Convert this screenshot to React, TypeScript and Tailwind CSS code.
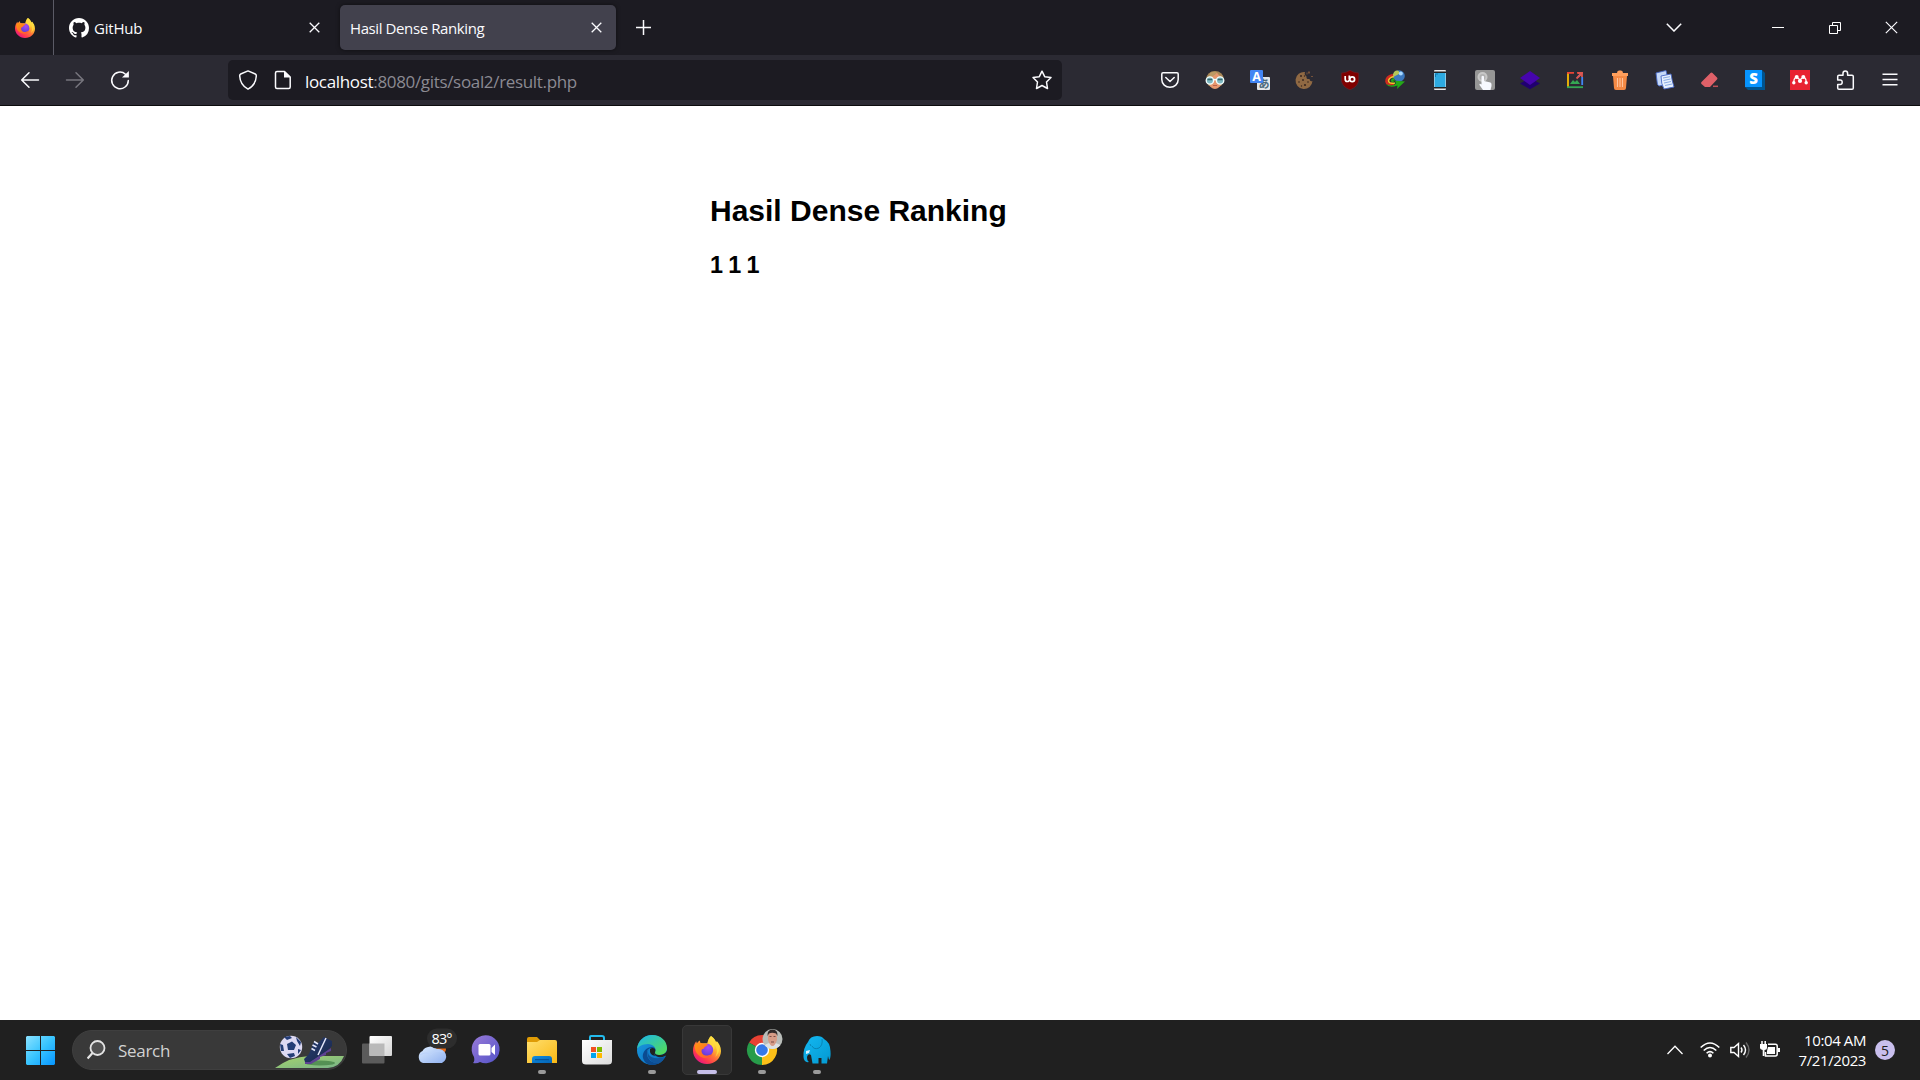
import React from "react";

const UI = "font-['Open_Sans','Noto_Sans',sans-serif]";

function Firefox({ id, size }: { id: string; size: number }) {
  return (
    <svg width={size} height={size} viewBox="0 0 28 28" className="block shrink-0">
      <defs>
        <linearGradient id={id + "a"} x1="0.85" y1="0.1" x2="0.2" y2="0.95">
          <stop offset="0" stopColor="#fff44f" />
          <stop offset="0.3" stopColor="#ffbd2f" />
          <stop offset="0.55" stopColor="#ff7139" />
          <stop offset="0.8" stopColor="#ff3750" />
          <stop offset="1" stopColor="#e31587" />
        </linearGradient>
        <radialGradient id={id + "b"} cx="0.6" cy="0.3" r="0.8">
          <stop offset="0" stopColor="#a84bf0" />
          <stop offset="0.6" stopColor="#7542e5" />
          <stop offset="1" stopColor="#5b3bc4" />
        </radialGradient>
        <linearGradient id={id + "c"} x1="0" y1="0" x2="1" y2="1">
          <stop offset="0" stopColor="#ff980e" />
          <stop offset="1" stopColor="#ff5634" />
        </linearGradient>
      </defs>
      <path
        d="M18 0C21 2 22 4 23 6.200C23.700 6.500 23.800 5.500 23.700 5C26 7.300 28 11 28 15C28 22 22 28 14 28C6 28 0 22 0 14.500C0 11 1.300 7.500 3.200 5.200C3.500 6 3.700 6.800 4 7.200C5 5.500 5.800 5 7 4.500C7 6 7.300 7 8 7.300C10.500 7 13 7.400 14.200 7.200C15 4.500 16 2 18 0Z"
        fill={"url(#" + id + "a)"}
      />
      <circle cx="14" cy="14" r="6.200" fill={"url(#" + id + "b)"} />
      <path
        d="M2 9C4 6.800 8 6.400 10.600 8C12.500 7.400 14 8 15 9C13.500 9.300 12.700 10.500 11.200 11.500C11.500 12.500 10 13 9 13.200C8 15 8.500 18 11.500 19.200C14.500 20.300 17 18.300 19.200 18.500C17.500 21.500 13.500 23 9.500 21.500C4.500 19.800 1 14.500 2 9Z"
        fill={"url(#" + id + "c)"}
      />
      <path d="M18 0C15.500 2.500 14.800 5 15.500 7.200C18.500 8.800 20.500 11 20.500 14C22 12.500 22 10 21 8.500C25 12 24.500 18 22 21C27 17.500 27.500 11 23.700 5C23.800 5.500 23.700 6.500 23 6.200C22 4 21 2 18 0Z" fill="#ffdc40" opacity="0.8" />
    </svg>
  );
}

function Cross({ size = 11, w = 1.3 }: { size?: number; w?: number }) {
  return (
    <svg width={size} height={size} viewBox="0 0 11 11" className="block shrink-0" fill="none" stroke="#fbfbfe" strokeWidth={w}>
      <path d="M.7 .7L10.300 10.300M10.300 .7L.7 10.300" />
    </svg>
  );
}

function Icon({ children }: { children: React.ReactNode }) {
  return (
    <svg width="20" height="20" viewBox="0 0 20 20" className="block shrink-0 overflow-visible" fill="none">
      {children}
    </svg>
  );
}

const line = { stroke: "#fbfbfe", strokeWidth: 1.5, strokeLinecap: "round" as const, strokeLinejoin: "round" as const };

const extensions: React.ReactNode[] = [
  <g {...line}>
    <path d="M3 2.700H17Q18.200 2.700 18.200 4V9.500C18.200 14 14.500 17.300 10 17.300S1.800 14 1.800 9.500V4Q1.800 2.700 3 2.700Z" />
    <path d="M5.800 7.500L10 11.500L14.200 7.500" />
  </g>,
  <g>
    <ellipse cx="10" cy="9.500" rx="9" ry="8.500" fill="#a88757" />
    <path d="M3 8C6 6 10 5 12 2.500C13 5 16 6 17 8V12C16 16 13 19 10 19S4 16 3 12Z" fill="#e5986f" />
    <path d="M4 7Q9 7 12 2Q8 1 5 3Z" fill="#bd9a65" />
    <circle cx="4.900" cy="10.500" r="3.700" fill="#7fb9c2" stroke="#f4ffff" strokeWidth="1.300" />
    <circle cx="15.100" cy="10.500" r="3.700" fill="#7fb9c2" stroke="#f4ffff" strokeWidth="1.300" />
    <path d="M2.500 9.500H7.300M12.700 9.500H17.500" stroke="#38666e" strokeWidth="1.500" />
    <path d="M8.500 10Q10 8.800 11.500 10" stroke="#f4ffff" strokeWidth="1.500" />
    <path d="M8 15.500H12" stroke="#bd604b" />
  </g>,
  <g>
    <rect x="7" y="7" width="13" height="13" rx="1" fill="#e4e7e9" />
    <text x="8.500" y="18" fontSize="11" fontWeight="700" fill="#4d6b7d" fontFamily="Noto Sans CJK JP, sans-serif">あ</text>
    <rect width="13" height="13" rx="1" fill="#4285f4" />
    <text x="6.500" y="10.800" textAnchor="middle" fontSize="12.500" fontWeight="700" fill="#fff" fontFamily="Open Sans, sans-serif">A</text>
  </g>,
  <g>
    <path d="M10 2A8.500 8.500 0 1 0 17.500 11Q15 12 14.500 9Q11 9.500 11.500 6.500Q9 4.500 10 2Z" fill="#906943" />
    <path d="M13 1.500h2v2h-2zM16 6h2v1h-2zM11.500 2.500h1v2h-1z" fill="#74513a" />
    <g fill="#37261f">
      <circle cx="6" cy="6" r="1" /><circle cx="8" cy="10" r=".9" /><circle cx="4" cy="12" r=".8" />
      <circle cx="10" cy="15" r="1.100" /><circle cx="13" cy="12" r=".8" /><circle cx="6.500" cy="16" r=".7" /><circle cx="9.500" cy="6" r=".7" />
    </g>
  </g>,
  <g>
    <path d="M10 .3Q14 3 18.700 3V9C18.700 14.500 15 18 10 19.700C5 18 1.300 14.500 1.300 9V3Q6 3 10 .3Z" fill="#800000" stroke="#5f2730" strokeWidth=".6" />
    <path d="M5.200 6V9Q5.200 11.500 7.200 11.500T9.300 9.500" stroke="#fff" strokeWidth="1.700" />
    <path d="M9.300 5.500V9.200" stroke="#fff" strokeWidth="1.700" />
    <circle cx="12.200" cy="9.200" r="2.400" stroke="#fff" strokeWidth="1.700" />
  </g>,
  <g>
    <circle cx="14" cy="6" r="5.800" fill="#3c78bd" />
    <path d="M9 2Q12-.5 14 1.500Q15 4 12 5Q9 6 8 8Q7 5 9 2Z" fill="#b6c657" />
    <circle cx="15.800" cy="3.500" r="2" fill="#a8d8ff" />
    <path d="M8 5Q1 7 1.500 11.500Q2 15.500 9 14" stroke="#cf2a20" strokeWidth="2.600" />
    <path d="M8.500 6.500Q3.500 8 3.500 11Q4 14 10 13" stroke="#f7c52c" strokeWidth="1.500" />
    <path d="M9 8Q5 9 6 11.500L10 13L8 10.500L20 11.500L12 19L12.500 15.500Q4 18.500 1 14Q7 17 11 13.500" fill="#24a817" />
  </g>,
  <g>
    <rect x="4" y="0" width="12" height="20" rx="1" fill="#e8e8e8" />
    <path d="M4 1.500h12v1.500H4zM4 17h12v1.500H4z" fill="#222" />
    <rect x="4.500" y="3" width="11" height="14" fill="#2daae1" />
    <path d="M5.500 7V4H8" stroke="#107bb4" />
  </g>,
  <g>
    <rect width="20" height="20" rx="2" fill="#969696" />
    <circle cx="7.500" cy="7" r="5" fill="#c8c8c8" /><circle cx="7.500" cy="7" r="3" fill="#b2b2b2" />
    <path d="M6.500 6.500Q7.700 5 9 6.500V11L15.500 12.500Q17 13 16.500 16L15.500 20H8L4.500 15Q4 13 6.500 14.500Z" fill="#f7f9ff" />
  </g>,
  <g>
    <path d="M0 13.500L10 8L20 13.500L10 19.300Z" fill="#20006f" />
    <path d="M0 8L10 1L20 8L10 15Z" fill="#4605ad" />
  </g>,
  <g strokeWidth="1.800">
    <path d="M3 2V17" stroke="#fbbc04" /><path d="M2 17.200H18" stroke="#34a853" />
    <path d="M2 2.800H9M12 2.800H18" stroke="#ea4335" /><path d="M17.200 7V15M13 7L17 3" stroke="#4285f4" />
    <path d="M11.500 8.500L16.500 3.500M13 3H17V7" stroke="#dc5650" />
    <path d="M5 14L8 10L10 12L12 10L15 14Z" fill="#34a853" />
  </g>,
  <g>
    <path d="M2 3H7Q7 .5 9 .5H11Q13 .5 13 3H18V6H2Z" fill="#ff9f5c" />
    <path d="M3 6H17L16 18Q16 20 14 20H6Q4 20 4 18Z" fill="#f58a45" />
    <path d="M7.500 8V17M10 8V17M12.500 8V17" stroke="#ffc39d" strokeWidth="1.100" />
  </g>,
  <g>
    <path d="M1 3L11 .5L14 14L4 16Q2 15 2 11Z" fill="#c5d8f7" stroke="#4668c5" strokeWidth=".9" />
    <path d="M6 6L16 4Q17 11 19 17L9 19Q6 14 6 6Z" fill="#e6effd" stroke="#4668c5" strokeWidth=".9" />
    <path d="M8 8L15 6.700M8.500 10.500L15.500 9M9 13L16 11.500M10 15.500L17 14" stroke="#88aae3" />
  </g>,
  <g>
    <path d="M1.500 12L10.500 3Q11.500 2 12.500 3L17 7.500Q18 8.500 17 9.500L10 17H5L1.500 14Q.5 13 1.500 12Z" fill="#df6068" />
    <path d="M13 16.300H18" stroke="#bd5057" strokeWidth="1.500" />
  </g>,
  <g>
    <path d="M0 17L3 20H20V3L17 0Z" fill="#00548f" />
    <rect width="17" height="17" fill="#0794ff" />
    <text x="8.500" y="13.700" textAnchor="middle" fontSize="15" fontWeight="800" fill="#fff" fontFamily="Open Sans, sans-serif">S</text>
  </g>,
  <g>
    <rect width="20" height="20" fill="#e82231" />
    <path d="M3.800 12Q3.600 9 5.500 7.500M16.200 12Q16.400 9 14.500 7.500" stroke="#fff" strokeWidth="1.300" />
    <path d="M6.500 7L10 9.800L13.500 7" stroke="#fff" strokeWidth="1.200" />
    <g fill="#fff"><circle cx="6.700" cy="6.900" r="2" /><circle cx="13.300" cy="6.900" r="2" /><circle cx="3.800" cy="12.700" r="1.700" /><circle cx="10" cy="11" r="2.100" /><circle cx="16.200" cy="12.700" r="1.700" /></g>
  </g>,
  <path {...line} d="M4 19.300Q2.700 19.300 2.700 18V14.500H5Q7.200 14.500 7.200 12.200T5 10H2.700V6.500Q2.700 5.200 4 5.200H8V3.200Q8 .9 10.300 .9T12.600 3.200V5.200H17Q18.300 5.200 18.300 6.500V18Q18.300 19.300 17 19.300Z" />,
  <path {...line} strokeLinecap="butt" d="M2.500 4.200H17.500M2.500 9.500H17.500M2.500 14.800H17.500" />,
];

function TabStrip() {
  return (
    <div className="flex h-[55px] shrink-0 items-center bg-[#1c1b22]">
      <div className="flex h-full w-[54px] items-center border-r border-[#5b5b66] pl-[15px]">
        <Firefox id="fxs" size={20} />
      </div>
      <div className="flex h-[45px] w-[286px] items-center pr-5 pl-[15px]">
        <svg width="20" height="20" viewBox="0 0 16 16" fill="#fff" className="shrink-0">
          <path d="M8 0C3.580 0 0 3.580 0 8c0 3.540 2.290 6.530 5.470 7.590.4.070.55-.17.55-.38 0-.19-.01-.82-.01-1.490-2.010.37-2.530-.49-2.690-.94-.09-.23-.48-.94-.82-1.130-.28-.15-.68-.52-.01-.53.63-.01 1.080.58 1.230.82.72 1.210 1.870.87 2.330.66.070-.52.28-.87.51-1.070-1.780-.2-3.640-.89-3.640-3.950 0-.87.31-1.590.82-2.150-.08-.2-.36-1.020.08-2.120 0 0 .67-.21 2.200.82.64-.18 1.320-.27 2-.27s1.360.09 2 .27c1.530-1.040 2.200-.82 2.200-.82.44 1.100.16 1.920.08 2.120.51.56.82 1.270.82 2.150 0 3.070-1.870 3.750-3.650 3.950.29.25.54.73.54 1.480 0 1.070-.01 1.930-.01 2.200 0 .21.15.46.55.38A8.010 8.010 0 0016 8c0-4.420-3.580-8-8-8z" />
        </svg>
        <span className="ml-[5px] pt-px text-[15px] tracking-[-0.2px] text-[#fbfbfe]">GitHub</span>
        <span className="ml-auto"><Cross /></span>
      </div>
      <div className="flex h-[45px] w-[276px] items-center rounded-[5px] bg-[#42414d] pr-[14px] pl-[10px] shadow-[0_0_4px_rgba(0,0,0,0.5)]">
        <span className="pt-px text-[15px] tracking-[-0.4px] text-[#fbfbfe]">Hasil Dense Ranking</span>
        <span className="ml-auto"><Cross /></span>
      </div>
      <svg width="15" height="15" viewBox="0 0 15 15" className="ml-5" stroke="#fbfbfe" strokeWidth="1.500">
        <path d="M0 7.500H15M7.500 0V15" />
      </svg>
      <div className="ml-auto flex items-center pr-[22px]">
        <svg width="16" height="9" viewBox="0 0 16 9" fill="none" stroke="#fbfbfe" strokeWidth="1.500" className="mr-[90px]">
          <path d="M.8 .8L8 8L15.200 .8" />
        </svg>
        <div className="mr-[45px] h-px w-3 bg-white" />
        <svg width="12" height="12" viewBox="0 0 12 12" fill="none" stroke="#fff" className="mr-[44px]">
          <path d="M.5 3.500H8.500V11.500H.5ZM3.500 3.500V.5H11.500V8.500H8.500" />
        </svg>
        <Cross size={13} w={1} />
      </div>
    </div>
  );
}

function Toolbar() {
  return (
    <div className="flex h-[51px] shrink-0 items-center border-b border-[#0c0c0d] bg-[#2b2a33]">
      <div className="flex w-[228px] items-center gap-[25px] pl-5">
        <Icon><path {...line} d="M18.500 10H1.800M9 2.700L1.700 10L9 17.300" /></Icon>
        <Icon><path {...line} stroke="#77767e" d="M1.500 10H18.200M11 2.700L18.300 10L11 17.300" /></Icon>
        <Icon>
          <path {...line} d="M18.300 10.500A8.300 8.300 0 1 1 15.500 4.200" />
          <path d="M18.900 1V7.500H12Z" fill="#fbfbfe" />
        </Icon>
      </div>
      <div className="flex h-10 w-[834px] items-center rounded-[5px] bg-[#1c1b22] pr-[10px] pl-[10px]">
        <Icon><path {...line} d="M10 .9L17.300 4Q18.400 4.500 18.300 6C18 12 15 16.500 10 19.200C5 16.500 2 12 1.700 6Q1.600 4.500 2.700 4Z" /></Icon>
        <span className="ml-[15px]">
          <Icon>
            <path {...line} d="M4 1.500H11.500L17.200 7V17Q17.200 18.500 15.700 18.500H4Q2.500 18.500 2.500 17V3Q2.500 1.500 4 1.500Z" />
            <path d="M11 1V7.500H17.500Z" fill="#fbfbfe" />
          </Icon>
        </span>
        <span className="ml-3 pt-[3px] text-[17px] leading-none tracking-[-0.33px] whitespace-nowrap text-[#8b8a92]">
          <span className="text-[#fbfbfe]">localhost</span>:8080/gits/soal2/result.php
        </span>
        <span className="ml-auto">
          <Icon><path {...line} d="M10 1.200L12.700 6.700L19 7.500L14.500 12L15.500 18.500L10 15.500L4.500 18.500L5.500 12L1 7.500L7.300 6.700Z" /></Icon>
        </span>
      </div>
      <div className="ml-auto flex pr-2">
        {extensions.map((e, i) => (
          <div key={i} className="flex w-[45px] justify-center"><Icon>{e}</Icon></div>
        ))}
      </div>
    </div>
  );
}

function AppSlot({ children, mark, active }: { children: React.ReactNode; mark?: boolean; active?: boolean }) {
  return (
    <div className="flex w-[55px] justify-center">
      <div className={active ? "relative flex h-[50px] w-[50px] items-center justify-center rounded-[5px] border border-[#383838] bg-[#2d2d2d]" : "relative flex h-[50px] w-[50px] items-center justify-center"}>
        {children}
        {mark && <div className={active ? "absolute bottom-0 h-1 w-5 rounded-full bg-[#c6bfe9]" : "absolute bottom-px h-1 w-2 rounded-full bg-[#9a9a9a]"} />}
      </div>
    </div>
  );
}

function Art({ children }: { children: React.ReactNode }) {
  return <svg width="30" height="30" viewBox="0 0 30 30" fill="none" className="block shrink-0 overflow-visible">{children}</svg>;
}

function Gradients() {
  const g: [string, string, string][] = [
    ["tv", "#ffffff", "#d5d5d5"], ["cloud", "#dcecff", "#8fb0ef"],
    ["chat", "#9a7bd8", "#5252c8"], ["fold", "#ffdf6e", "#f9b814"], ["bag", "#ffffff", "#dcdcdc"],
    ["edgeA", "#1bb5ee", "#58e04c"], ["edgeB", "#1b9de0", "#0867bd"], ["ele", "#14b8f2", "#0399d1"],
    ["grass", "#a6d36b", "#77b389"], ["boot", "#293f75", "#172546"], ["blue", "#0f8de0", "#0463b4"],
  ];
  return (
    <defs>
      {g.map(([id, a, b]) => (
        <linearGradient key={id} id={id} x1="0" y1="0" x2="1" y2="1">
          <stop offset="0" stopColor={a} /><stop offset="1" stopColor={b} />
        </linearGradient>
      ))}
      <linearGradient id="logo" gradientUnits="userSpaceOnUse" x1="0" y1="0" x2="29" y2="29">
        <stop offset="0" stopColor="#8be2ff" /><stop offset="0.5" stopColor="#38c4ff" /><stop offset="1" stopColor="#0695ff" />
      </linearGradient>
    </defs>
  );
}

function Taskbar() {
  return (
    <div className="flex h-[60px] shrink-0 items-center bg-[#202020]">
      <svg width="29" height="29" viewBox="0 0 29 29" className="ml-[26px]">
        <Gradients />
        <path d="M1 0H14V14H0V1ZM15 0H28L29 1V14H15ZM0 15H14V29H1L0 28ZM15 15H29V28L28 29H15Z" fill="url(#logo)" />
      </svg>
      <div className="ml-[17px] flex h-10 w-[275px] items-center overflow-hidden rounded-full border border-[#3f3f3f] bg-[#393939] pl-[14px]">
        <svg width="19" height="20" viewBox="0 0 19 20" fill="none" className="shrink-0" stroke="#e4e4e4" strokeWidth="1.800">
          <circle cx="10.500" cy="8" r="7" fill="#525252" /><path d="M5.500 13L.6 18.500" strokeWidth="2.200" />
        </svg>
        <span className="ml-3 pt-px text-[17px] tracking-[-0.3px] text-[#d2d2d2]">Search</span>
        <svg width="71" height="38" viewBox="0 0 71 38" className="ml-auto shrink-0" fill="none">
          <path d="M0 37Q15 26 34 25H69Q65 36 53 37Z" fill="url(#grass)" />
          <ellipse cx="45" cy="32" rx="15" ry="2.500" fill="#3e7d43" opacity=".7" />
          <circle cx="16" cy="16" r="11.200" fill="#ddd9f3" />
          <path d="M12 13L17 10.500L21 14L19 19L13 19ZM9 6L15 5L17 7L12 9ZM21 6L26 11L25 15L22 10ZM5 13L8 14L9 20L6 20ZM12 23L19 22L20 25L15 27ZM23 18L26 19L23 23Z" fill="#243d76" />
          <path d="M30 31L29 28L34 23L39 11L42 13L49 6L57 10V15L50 22L36 31L34 33Z" fill="url(#boot)" />
          <path d="M30 31L35 31L56 17V20L51 22V24L45 26V28L36 33H30Z" fill="#5d4292" />
          <path d="M39 10.500L43 13M37.500 14L41.500 16M36.500 17.500L40 19.500M51 7L43 24" stroke="#e4e7fa" strokeWidth="1.500" />
        </svg>
      </div>
      <div className="ml-[2px] flex">
        <AppSlot>
          <Art>
            <rect x="0" y="8.500" width="22.500" height="20" rx="1" fill="#5b5b5b" />
            <rect x="7.500" y="1" width="22.500" height="20" rx="1" fill="url(#tv)" />
            <rect x="7.500" y="8.500" width="15" height="12.500" fill="#b9b9b9" />
          </Art>
        </AppSlot>
        <AppSlot>
          <Art>
            <circle cx="24" cy="14" r="5" fill="#e66b19" />
            <path d="M6 28A6.500 6.500 0 0 1 5.500 16A9 8 0 0 1 20 14A8 7.500 0 0 1 25 28Z" fill="url(#cloud)" />
            <path d="M3 20Q9 16 14 20Q18 14 26 17" stroke="#bbd2fb" />
            <rect x="10" y="-6.500" width="30" height="20" rx="10" fill="#2d2d2d" />
            <text x="14.500" y="9" fontSize="14.500" textLength="21" fill="#fff" fontFamily="Open Sans, sans-serif">83°</text>
          </Art>
        </AppSlot>
        <AppSlot>
          <Art>
            <path d="M1 28Q3 26 2 22A14 14 0 1 1 8 27Q5 29 1 28Z" fill="url(#chat)" />
            <rect x="6.500" y="9" width="12" height="11.500" rx="1.500" fill="#fff" /><path d="M19.500 13L23 9.500V20L19.500 17Z" fill="#fff" />
          </Art>
        </AppSlot>
        <AppSlot mark>
          <Art>
            <path d="M0 4Q0 2 2 2H10L13 5V10H0Z" fill="#df9b05" />
            <path d="M0 7H10L13 5H28Q30 5 30 7V28H0Z" fill="url(#fold)" />
            <path d="M5 28V24Q5 21 8 21H22Q25 21 25 24V28Z" fill="url(#blue)" /><path d="M8 24.700H22" stroke="#044c92" />
          </Art>
        </AppSlot>
        <AppSlot>
          <Art>
            <path d="M8 6V2Q8 1 9 1H20Q22 1 22 3V6" stroke="#23bbed" strokeWidth="2" />
            <path d="M0 5H30V26Q30 29.500 26 29.500H4Q0 29.500 0 26Z" fill="url(#bag)" />
            <path d="M9 12H14V17H9Z" fill="#f25022" /><path d="M15 12H20V17H15Z" fill="#7fba00" />
            <path d="M9 18H14V23H9Z" fill="#00a4ef" /><path d="M15 18H20V23H15Z" fill="#ffb900" />
          </Art>
        </AppSlot>
        <AppSlot mark>
          <Art>
            <circle cx="15" cy="15" r="15" fill="url(#edgeB)" />
            <path d="M0 14C1 5 8 0 15 0C24 0 30 6 30 13C30 18 26 20 22 20Q17 20 18 17C20 13 16 9 11 9C5 9 1 12 0 14Z" fill="url(#edgeA)" />
            <path d="M10.500 15C8 22 14 29 22 28C16 32 8 30 6 23C5 18 8 14 12 12.500Q18 11 18.500 15Q14 11 10.500 15Z" fill="#0b4b91" />
            <path d="M12.500 13C8 19 14 26 28 22Q26 26 22 28.500C13 29 7 19 12.500 13Z" fill="#10559c" />
            <path d="M18 17Q16 19 19 21Q23 23.500 28 21L30.500 20V14Q29 20 22 20Q17.500 20 18 17Z" fill="#202020" />
            <path d="M13 14Q16.500 11.500 18.500 15L18 17.500Q16.500 19.500 18.500 21Q12 20 13 14Z" fill="#202020" />
          </Art>
        </AppSlot>
        <AppSlot mark active><Firefox id="fxl" size={28} /></AppSlot>
        <AppSlot mark>
          <Art>
            <path d="M15 15L2 7.500A15 15 0 0 1 28 7.500Z" fill="#e84133" />
            <path d="M15 15L28 7.500A15 15 0 0 1 15 30Z" fill="#fcc018" />
            <path d="M15 15L15 30A15 15 0 0 1 2 7.500Z" fill="#279c4a" />
            <path d="M15 30L21.500 18L28 8H15V15Z" fill="#fcc018" />
            <circle cx="15" cy="15" r="7.200" fill="#fff" /><circle cx="15" cy="15" r="5.800" fill="#3579e8" />
            <circle cx="25.500" cy="4" r="10" fill="#b9bdb9" />
            <path d="M17.500 10Q25 5 33.500 10A10 10 0 0 1 17.500 10Z" fill="#dce1e2" />
            <path d="M21 1Q21-5 25.500-5T30 1V5Q28 11 25.500 11T21 5Z" fill="#d69c87" />
            <path d="M20.500 1Q20-5.500 25.500-5.500Q31-5.500 30.500 1L29-1.500Q25-3 22-1.500Z" fill="#2f2929" />
            <path d="M22.500 1.500H24.500M26.500 1.500H28.500M24 7H27" stroke="#784b42" />
          </Art>
        </AppSlot>
        <AppSlot mark>
          <Art>
            <path d="M6 7Q8 1 15 1Q20 1 22 4Q28 7 28.500 16Q29 22 27.500 25Q26.500 24 26 21L25 28.500H19.500V23H16.500V28.500H10.500L9 20Q6 18 5 22Q5 26 7 27Q2 28 1.500 22Q1 13 6 7Z" fill="url(#ele)" />
            <path d="M4 16L8 15L7 18L4 19Z" fill="#d8f2ff" />
            <path d="M20 4Q21 10 17 13Q12 15 10 11M8 9L9 11" stroke="#087aa9" strokeWidth=".8" />
          </Art>
        </AppSlot>
      </div>
      <div className="ml-auto flex items-center pr-[25px]">
        <svg width="16" height="10" viewBox="0 0 16 10" fill="none" stroke="#fff" strokeWidth="1.300" className="mr-[17px]"><path d="M.5 9L8 1.200L15.500 9" /></svg>
        <svg width="20" height="20" viewBox="0 0 20 20" fill="none" stroke="#fff" strokeWidth="1.600" className="mr-[10px]">
          <path d="M.7 7.500Q10-1.500 19.300 7.500M3.700 10.500Q10 4.500 16.300 10.500M6.600 13.300Q10 10 13.400 13.300" /><circle cx="10" cy="15.500" r="2" fill="#fff" stroke="none" />
        </svg>
        <svg width="20" height="20" viewBox="0 0 20 20" fill="none" stroke="#fff" strokeWidth="1.400" className="mr-[10px]">
          <path d="M.8 7.500H4L8.500 3.500V16.500L4 12.500H.8ZM11 7.500Q13 10 11 12.500M13.500 5Q17.500 10 13.500 15" /><path d="M16 2.500Q22 10 16 17.500" stroke="#666" />
        </svg>
        <svg width="20" height="20" viewBox="0 0 20 20" fill="none" stroke="#fff" strokeWidth="1.500" className="mr-[19px]">
          <path d="M8 4.200H15.500Q17.200 4.200 17.200 6V14Q17.200 16 15.500 16H5.500V12" /><path d="M8 7H15V14H7V11Z" fill="#fff" stroke="none" />
          <path d="M18 8H20V12H18ZM0 4H7V8Q7 10 4.500 10V16H2.700V10Q0 9.500 0 8Z" fill="#fff" stroke="none" /><path d="M2 1V4M5.200 1V4" />
        </svg>
        <div className="flex w-[67px] flex-col items-end text-[15px] leading-5 tracking-[-0.4px] whitespace-nowrap text-white">
          <span>10:04 AM</span><span>7/21/2023</span>
        </div>
        <div className="ml-[9px] flex h-5 w-5 items-center justify-center rounded-full bg-[#c9bfed] pt-px text-[14px] leading-none text-[#202020]">5</div>
      </div>
    </div>
  );
}

export default function App() {
  return (
    <div className={"flex h-[1080px] w-[1920px] flex-col overflow-hidden bg-white " + UI}>
      <TabStrip />
      <Toolbar />
      <main className="flex-1 pt-[87px] pl-[710px] font-['Liberation_Sans',Arial,sans-serif] font-bold text-black">
        <h2 className="text-[30px] leading-[35px]">Hasil Dense Ranking</h2>
        <h3 className="mt-6 text-[23.400px] leading-[27px] [word-spacing:-1.300px]">1 1 1</h3>
      </main>
      <Taskbar />
    </div>
  );
}
